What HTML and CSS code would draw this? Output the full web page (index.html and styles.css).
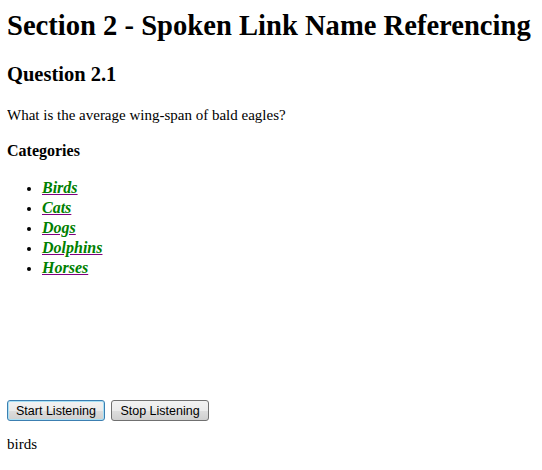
FILE: index.html
```html
<!DOCTYPE html>
<html>
<head>
<meta charset="utf-8">
<title>Section 2</title>
<link rel="stylesheet" href="styles.css">
</head>
<body>
<h1 class="title">Section 2 - Spoken Link Name Referencing</h1>
<h2 class="question">Question 2.1</h2>
<p class="text">What is the average wing-span of bald eagles?</p>
<h4 class="cat">Categories</h4>
<ul class="list">
<li><a class="link" href="#">Birds</a></li>
<li><a class="link" href="#">Cats</a></li>
<li><a class="link" href="#">Dogs</a></li>
<li><a class="link" href="#">Dolphins</a></li>
<li><a class="link" href="#">Horses</a></li>
</ul>
<div class="controls">
<button class="btn btn-focus">Start Listening</button>
<button class="btn">Stop Listening</button>
</div>
<p class="result">birds</p>
</body>
</html>
```
FILE: styles.css
```css
body {
  margin: 8px 7px;
  font-family: "Liberation Serif", "Times New Roman", serif;
  font-size: 15px;
  color: #000;
  background: #fff;
}
.title { font-size: 28.6px; margin: 1px 0 20px; line-height: 34px; white-space: nowrap; }
.question { font-size: 20.5px; margin: 0 0 21px; line-height: 23px; }
.text { margin: 0 0 18px; line-height: 17px; }
.cat { margin: 0 0 18px; font-size: 16px; line-height: 18px; }
.list { margin: 0 0 122px; padding-left: 35px; }
.list li { line-height: 20px; }
.link {
  color: green;
  font-size: 16px;
  font-weight: bold;
  font-style: italic;
  text-decoration: underline;
  text-decoration-color: purple;
}
.controls { display: flex; gap: 6px; }
.btn {
  font-family: "Liberation Sans", Arial, sans-serif;
  font-size: 12.5px;
  height: 21px;
  width: 98px;
  padding: 0;
  border: 1px solid #707070;
  border-radius: 3px;
  background: linear-gradient(#f2f2f2 0%, #ebebeb 50%, #dddddd 51%, #cfcfcf 100%);
  color: #000;
}
.btn-focus { border-color: #3c7fb1; box-shadow: inset 0 0 0 1px #a8e0f5; }
.result { margin: 15px 0 0; line-height: 17px; }
```
